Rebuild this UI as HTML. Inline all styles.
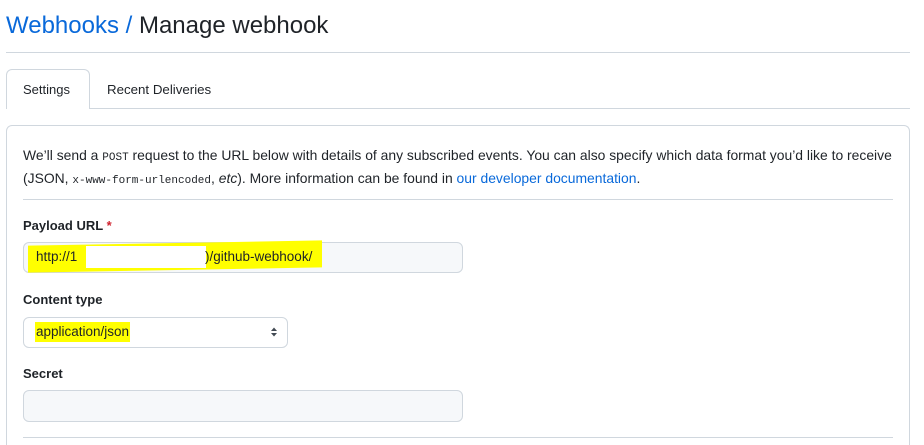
<!DOCTYPE html>
<html style="height:445px;overflow:hidden"><head><style>
*{margin:0;padding:0;box-sizing:border-box}
body{width:924px;height:445px;overflow:hidden;background:#fff;font-family:"Liberation Sans",sans-serif;color:#1f2328;position:relative;font-size:14px}
.a{position:absolute}
.code{font-family:"Liberation Mono",monospace;font-size:11px}
</style></head><body>
<div class="a" style="left:6px;top:12px;font-size:24px;white-space:nowrap"><span style="color:#0969da">Webhooks /</span> Manage webhook</div>
<div class="a" style="left:6px;top:52px;width:904px;height:1px;background:#d0d7de"></div>
<div class="a" style="left:6px;top:108px;width:904px;height:1px;background:#d0d7de"></div>
<div class="a" style="left:6px;top:69px;width:84px;height:40px;border:1px solid #d0d7de;border-bottom:none;border-radius:6px 6px 0 0;background:#fff"></div>
<div class="a" style="left:23px;top:82px;font-size:13px">Settings</div>
<div class="a" style="left:107px;top:82px;font-size:13.3px">Recent Deliveries</div>
<div class="a" style="left:6px;top:125px;width:904px;height:330px;border:1px solid #d0d7de;border-bottom:none;border-radius:6px 6px 0 0"></div>
<div class="a" style="left:23px;top:145px;font-size:13.9px;line-height:20px;white-space:nowrap">We’ll send a <span class="code">POST</span> request to the URL below with details of any subscribed events. You can also specify which data format you’d like to receive<br>(JSON, <span class="code">x-www-form-urlencoded</span>, <i>etc</i>). More information can be found in <span style="color:#0969da">our developer documentation</span>.</div>
<div class="a" style="left:23px;top:199px;width:870px;height:1px;background:#d0d7de"></div>
<div class="a" style="left:23px;top:218px;font-size:13px;font-weight:bold">Payload URL <span style="color:#cf222e">*</span></div>
<div class="a" style="left:23px;top:242px;width:440px;height:31px;border:1px solid #d0d7de;border-radius:6px;background:#f6f8fa"></div>
<div class="a" style="left:28px;top:243px;width:294px;height:27px;background:#ffff00;transform:skewY(-1deg)"></div>
<div class="a" style="left:86px;top:246px;width:120px;height:22px;background:#fff"></div>
<div class="a" style="left:36px;top:249px;font-size:13.5px;white-space:nowrap">http://1</div>
<div class="a" style="left:205px;top:249px;font-size:13.5px;white-space:nowrap">)/github-webhook/</div>
<div class="a" style="left:23px;top:292px;font-size:13px;font-weight:bold">Content type</div>
<div class="a" style="left:23px;top:317px;width:265px;height:31px;border:1px solid #d0d7de;border-radius:6px;background:#fff"></div>
<div class="a" style="left:35px;top:322px;width:95px;height:20px;background:#ffff00"></div>
<div class="a" style="left:36px;top:324px;font-size:13.5px">application/json</div>
<svg class="a" style="left:270px;top:326px" width="8" height="12"><path d="M1 5L4 1.5L7 5Z M1 7L4 10.5L7 7Z" fill="#424a53"/></svg>
<div class="a" style="left:23px;top:366px;font-size:13px;font-weight:bold">Secret</div>
<div class="a" style="left:23px;top:390px;width:440px;height:32px;border:1px solid #d0d7de;border-radius:6px;background:#f6f8fa"></div>
<div class="a" style="left:23px;top:437px;width:870px;height:1px;background:#d0d7de"></div>
</body></html>
